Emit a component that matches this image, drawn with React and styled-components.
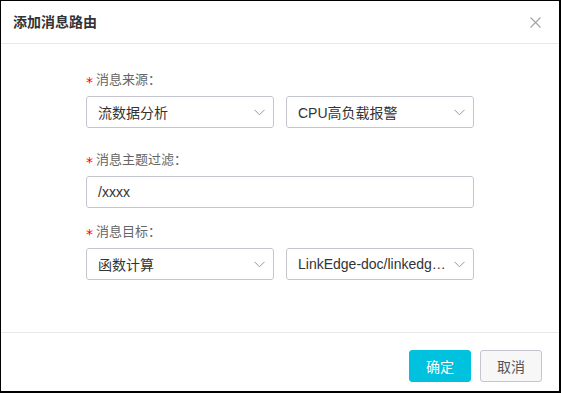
import styled, { createGlobalStyle } from "styled-components";

const GlobalStyle = createGlobalStyle`
  html, body {
    margin: 0;
    padding: 0;
    background: #fff;
  }
  * {
    box-sizing: border-box;
  }
`;

export default function App() {
  return (
    <>
      <GlobalStyle />
      <Dialog>
        {/* ----------- 头部 ----------- */}
        <Header>
          <Title>添加消息路由</Title>
          <CloseButton aria-label="close">
            <svg width="11" height="11" viewBox="0 0 11 11">
              <path d="M0.5 0.5 L10.5 10.5 M10.5 0.5 L0.5 10.5" stroke="#a3a3a3" strokeWidth="1.1" fill="none" />
            </svg>
          </CloseButton>
        </Header>

        {/* ----------- 表单 ----------- */}
        <Body>
          <FormItem $gap={22}>
            <Label><Star>*</Star>消息来源：</Label>
            <Row>
              <Select><SelectText>流数据分析</SelectText><Chevron /></Select>
              <Select><SelectText>CPU高负载报警</SelectText><Chevron /></Select>
            </Row>
          </FormItem>

          <FormItem $gap={14}>
            <Label><Star>*</Star>消息主题过滤：</Label>
            <Input>/xxxx</Input>
          </FormItem>

          <FormItem $gap={0}>
            <Label><Star>*</Star>消息目标：</Label>
            <Row>
              <Select><SelectText>函数计算</SelectText><Chevron /></Select>
              <Select><SelectText>LinkEdge-doc/linkedg…</SelectText><Chevron /></Select>
            </Row>
          </FormItem>
        </Body>

        {/* ----------- 底部按钮 ----------- */}
        <Footer>
          <Button $primary>确定</Button>
          <Button>取消</Button>
        </Footer>
      </Dialog>
    </>
  );
}

function Chevron() {
  return (
    <ChevronIcon width="11" height="7" viewBox="0 0 11 7">
      <path d="M0.5 0.8 L5.5 5.8 L10.5 0.8" stroke="#9a9a9a" strokeWidth="1" fill="none" />
    </ChevronIcon>
  );
}

/* ===================== CSS ===================== */

const FONT = `"Liberation Sans", "Noto Sans CJK SC", sans-serif`;

const Dialog = styled.div`
  width: 561px;
  height: 393px;
  border-style: solid;
  border-color: #000;
  border-width: 1px 2px 2px 1px;
  display: flex;
  flex-direction: column;
  font-family: ${FONT};
  color: #333;
`;

const Header = styled.div`
  height: 43px;
  flex-shrink: 0;
  display: flex;
  align-items: center;
  justify-content: space-between;
  padding: 0 18px 2px 12px;
  border-bottom: 1px solid #e8e8e8;
`;

const Title = styled.div`
  font-size: 14px;
  font-weight: 700;
  color: #333;
  margin-top: -1px;
`;

const CloseButton = styled.div`
  display: flex;
  width: 11px;
  height: 11px;
  margin-top: 2px;
`;

const Body = styled.div`
  flex: 1;
  padding: 26px 0 0 85px;
  display: flex;
  flex-direction: column;
`;

const FormItem = styled.div`
  width: 388px;
  display: flex;
  flex-direction: column;
  margin-bottom: ${(p) => p.$gap}px;
`;

const Label = styled.div`
  height: 20px;
  line-height: 20px;
  font-size: 13px;
  color: #666;
  margin-bottom: 6px;
  display: flex;
  align-items: center;
`;

const Star = styled.span`
  color: #f00;
  font-family: "DejaVu Sans", sans-serif;
  font-size: 14px;
  width: 10px;
  margin-top: 3px;
`;

const Row = styled.div`
  display: flex;
  gap: 12px;
`;

const Select = styled.div`
  flex: 1;
  height: 32px;
  min-width: 0;
  border: 1px solid #c4c6cf;
  border-radius: 3px;
  display: flex;
  align-items: center;
  padding: 0 8px 0 11px;
  background: #fff;
`;

const SelectText = styled.span`
  flex: 1;
  min-width: 0;
  font-size: 14px;
  color: #333;
  white-space: nowrap;
  overflow: hidden;
  padding-right: 4px;
`;

const ChevronIcon = styled.svg`
  flex-shrink: 0;
  margin-top: 1px;
`;

const Input = styled.div`
  height: 32px;
  border: 1px solid #c4c6cf;
  border-radius: 3px;
  display: flex;
  align-items: center;
  padding: 0 11px;
  font-size: 14px;
  color: #333;
`;

const Footer = styled.div`
  height: 59px;
  flex-shrink: 0;
  border-top: 1px solid #e8e8e8;
  display: flex;
  justify-content: flex-end;
  align-items: flex-start;
  gap: 9px;
  padding: 17px 17px 0 0;
`;

const Button = styled.div`
  width: 62px;
  height: 32px;
  border-radius: 3px;
  display: flex;
  align-items: center;
  justify-content: center;
  font-size: 14px;
  background: ${(p) => (p.$primary ? "#00c1de" : "#f7f7f7")};
  color: ${(p) => (p.$primary ? "#fff" : "#555")};
  border: 1px solid ${(p) => (p.$primary ? "#00c1de" : "#c4c6cf")};
`;
